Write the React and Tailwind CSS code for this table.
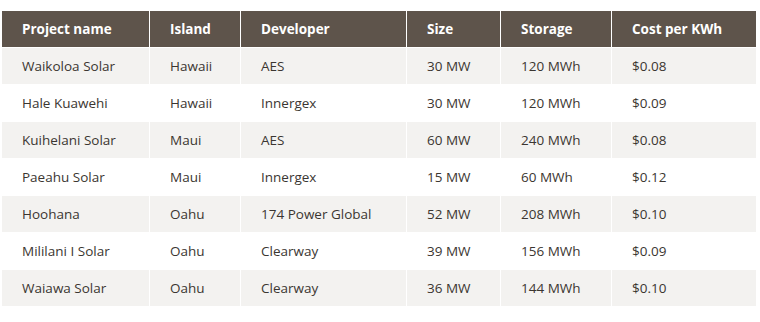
import React from "react";

const rows = [
  ["Waikoloa Solar", "Hawaii", "AES", "30 MW", "120 MWh", "$0.08"],
  ["Hale Kuawehi", "Hawaii", "Innergex", "30 MW", "120 MWh", "$0.09"],
  ["Kuihelani Solar", "Maui", "AES", "60 MW", "240 MWh", "$0.08"],
  ["Paeahu Solar", "Maui", "Innergex", "15 MW", "60 MWh", "$0.12"],
  ["Hoohana", "Oahu", "174 Power Global", "52 MW", "208 MWh", "$0.10"],
  ["Mililani I Solar", "Oahu", "Clearway", "39 MW", "156 MWh", "$0.09"],
  ["Waiawa Solar", "Oahu", "Clearway", "36 MW", "144 MWh", "$0.10"],
];

const headers = ["Project name", "Island", "Developer", "Size", "Storage", "Cost per KWh"];

export default function App() {
  return (
    <div className="w-[760px] h-[322px] bg-white pt-[11px] pl-[2px]" style={{ fontFamily: '"Open Sans", "Liberation Sans", sans-serif' }}>
      <div className="grid grid-cols-[147px_90px_165px_93px_110px_144px] gap-x-px gap-y-px w-[754px] bg-white">
        {headers.map((h) => (
          <div key={h} className="h-9 flex items-center pl-5 bg-[#5e544b] text-white font-bold text-[13.5px]">
            {h}
          </div>
        ))}
        {rows.map((r, i) =>
          r.map((c, j) => (
            <div
              key={i + "-" + j}
              className={`h-9 flex items-center pl-5 text-[13.5px] text-[#3b3631] ${i % 2 === 0 ? "bg-[#f3f2f0]" : "bg-white"}`}
            >
              {c}
            </div>
          ))
        )}
      </div>
    </div>
  );
}
